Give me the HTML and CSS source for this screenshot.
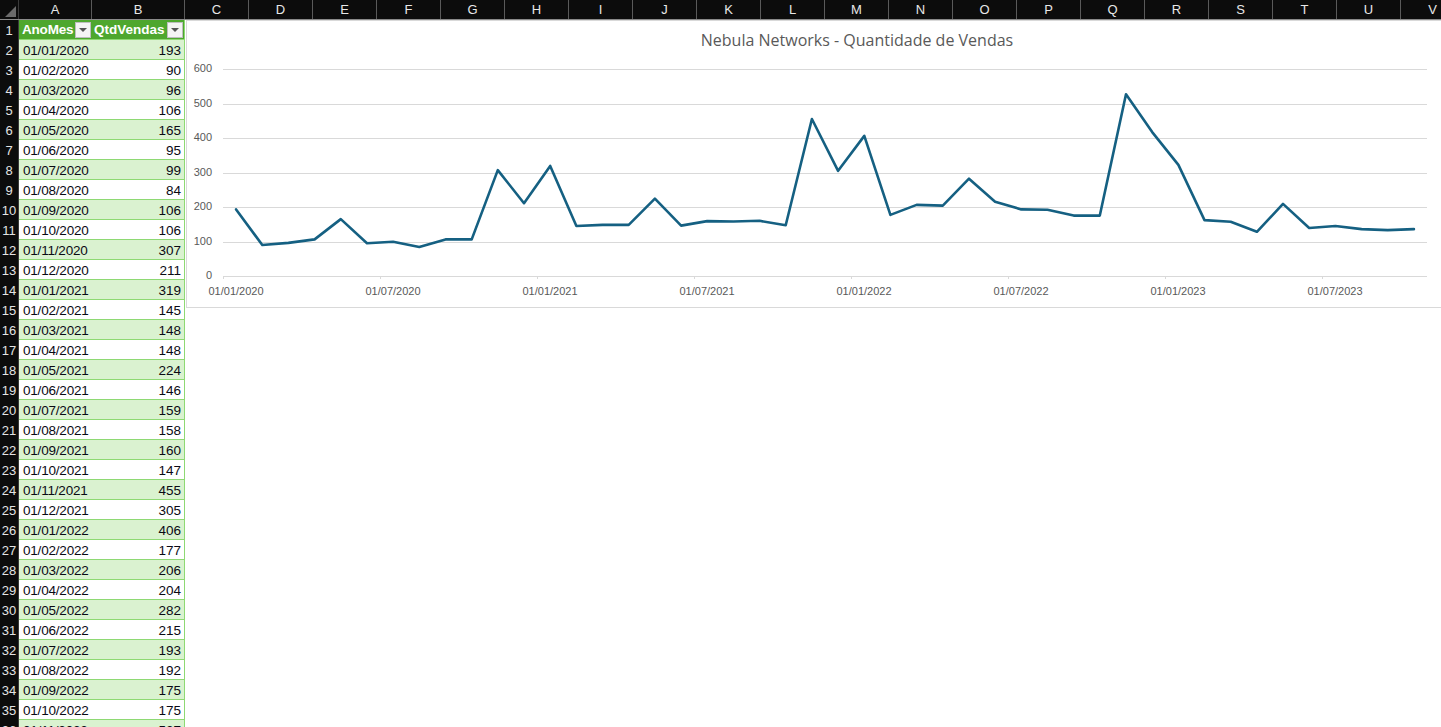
FILE: index.html
```html
<!DOCTYPE html>
<html lang="pt">
<head>
<meta charset="utf-8">
<title>Nebula Networks</title>
<link rel="stylesheet" href="styles.css">
</head>
<body>
<div class="sheet">
  <div class="colhead">
    <div class="corner"><span class="tri"></span></div>
    <div class="ch ch-a">A</div>
    <div class="ch ch-b">B</div>
    <div class="ch">C</div><div class="ch">D</div><div class="ch">E</div><div class="ch">F</div><div class="ch">G</div>
    <div class="ch">H</div><div class="ch">I</div><div class="ch">J</div><div class="ch">K</div><div class="ch">L</div>
    <div class="ch">M</div><div class="ch">N</div><div class="ch">O</div><div class="ch">P</div><div class="ch">Q</div>
    <div class="ch">R</div><div class="ch">S</div><div class="ch">T</div><div class="ch">U</div><div class="ch">V</div>
  </div>
  <div class="rows">
    <div class="row hdr"><div class="rh">1</div><div class="c a th">AnoMes<span class="fb"><span class="ft"></span></span></div><div class="c b th">QtdVendas<span class="fb"><span class="ft"></span></span></div></div>
    <div class="row band"><div class="rh">2</div><div class="c a">01/01/2020</div><div class="c b">193</div></div>
    <div class="row"><div class="rh">3</div><div class="c a">01/02/2020</div><div class="c b">90</div></div>
    <div class="row band"><div class="rh">4</div><div class="c a">01/03/2020</div><div class="c b">96</div></div>
    <div class="row"><div class="rh">5</div><div class="c a">01/04/2020</div><div class="c b">106</div></div>
    <div class="row band"><div class="rh">6</div><div class="c a">01/05/2020</div><div class="c b">165</div></div>
    <div class="row"><div class="rh">7</div><div class="c a">01/06/2020</div><div class="c b">95</div></div>
    <div class="row band"><div class="rh">8</div><div class="c a">01/07/2020</div><div class="c b">99</div></div>
    <div class="row"><div class="rh">9</div><div class="c a">01/08/2020</div><div class="c b">84</div></div>
    <div class="row band"><div class="rh">10</div><div class="c a">01/09/2020</div><div class="c b">106</div></div>
    <div class="row"><div class="rh">11</div><div class="c a">01/10/2020</div><div class="c b">106</div></div>
    <div class="row band"><div class="rh">12</div><div class="c a">01/11/2020</div><div class="c b">307</div></div>
    <div class="row"><div class="rh">13</div><div class="c a">01/12/2020</div><div class="c b">211</div></div>
    <div class="row band"><div class="rh">14</div><div class="c a">01/01/2021</div><div class="c b">319</div></div>
    <div class="row"><div class="rh">15</div><div class="c a">01/02/2021</div><div class="c b">145</div></div>
    <div class="row band"><div class="rh">16</div><div class="c a">01/03/2021</div><div class="c b">148</div></div>
    <div class="row"><div class="rh">17</div><div class="c a">01/04/2021</div><div class="c b">148</div></div>
    <div class="row band"><div class="rh">18</div><div class="c a">01/05/2021</div><div class="c b">224</div></div>
    <div class="row"><div class="rh">19</div><div class="c a">01/06/2021</div><div class="c b">146</div></div>
    <div class="row band"><div class="rh">20</div><div class="c a">01/07/2021</div><div class="c b">159</div></div>
    <div class="row"><div class="rh">21</div><div class="c a">01/08/2021</div><div class="c b">158</div></div>
    <div class="row band"><div class="rh">22</div><div class="c a">01/09/2021</div><div class="c b">160</div></div>
    <div class="row"><div class="rh">23</div><div class="c a">01/10/2021</div><div class="c b">147</div></div>
    <div class="row band"><div class="rh">24</div><div class="c a">01/11/2021</div><div class="c b">455</div></div>
    <div class="row"><div class="rh">25</div><div class="c a">01/12/2021</div><div class="c b">305</div></div>
    <div class="row band"><div class="rh">26</div><div class="c a">01/01/2022</div><div class="c b">406</div></div>
    <div class="row"><div class="rh">27</div><div class="c a">01/02/2022</div><div class="c b">177</div></div>
    <div class="row band"><div class="rh">28</div><div class="c a">01/03/2022</div><div class="c b">206</div></div>
    <div class="row"><div class="rh">29</div><div class="c a">01/04/2022</div><div class="c b">204</div></div>
    <div class="row band"><div class="rh">30</div><div class="c a">01/05/2022</div><div class="c b">282</div></div>
    <div class="row"><div class="rh">31</div><div class="c a">01/06/2022</div><div class="c b">215</div></div>
    <div class="row band"><div class="rh">32</div><div class="c a">01/07/2022</div><div class="c b">193</div></div>
    <div class="row"><div class="rh">33</div><div class="c a">01/08/2022</div><div class="c b">192</div></div>
    <div class="row band"><div class="rh">34</div><div class="c a">01/09/2022</div><div class="c b">175</div></div>
    <div class="row"><div class="rh">35</div><div class="c a">01/10/2022</div><div class="c b">175</div></div>
    <div class="row band"><div class="rh">36</div><div class="c a">01/11/2022</div><div class="c b">527</div></div>
  </div>

  <div class="chart">
    <div class="chart-title">Nebula Networks - Quantidade de Vendas</div>
    <svg class="plot" width="1340" height="250" viewBox="1 37 1340 250">
      <g class="grid">
        <line x1="37" y1="49.5" x2="1241" y2="49.5"/>
        <line x1="37" y1="84.5" x2="1241" y2="84.5"/>
        <line x1="37" y1="118.5" x2="1241" y2="118.5"/>
        <line x1="37" y1="153.5" x2="1241" y2="153.5"/>
        <line x1="37" y1="187.5" x2="1241" y2="187.5"/>
        <line x1="37" y1="222.5" x2="1241" y2="222.5"/>
        <line x1="37" y1="256.5" x2="1241" y2="256.5"/>
        <line x1="37.5" y1="256" x2="37.5" y2="259"/>
        <line x1="194.5" y1="256" x2="194.5" y2="259"/>
        <line x1="351.5" y1="256" x2="351.5" y2="259"/>
        <line x1="508.5" y1="256" x2="508.5" y2="259"/>
        <line x1="665.5" y1="256" x2="665.5" y2="259"/>
        <line x1="822.5" y1="256" x2="822.5" y2="259"/>
        <line x1="979.5" y1="256" x2="979.5" y2="259"/>
        <line x1="1136.5" y1="256" x2="1136.5" y2="259"/>
      </g>
      <g class="ylab">
        <text x="26" y="49">600</text>
        <text x="26" y="84">500</text>
        <text x="26" y="118">400</text>
        <text x="26" y="153">300</text>
        <text x="26" y="187">200</text>
        <text x="26" y="222">100</text>
        <text x="26" y="256">0</text>
      </g>
      <g class="xlab">
        <text x="50" y="272">01/01/2020</text>
        <text x="207" y="272">01/07/2020</text>
        <text x="364" y="272">01/01/2021</text>
        <text x="521" y="272">01/07/2021</text>
        <text x="678" y="272">01/01/2022</text>
        <text x="835" y="272">01/07/2022</text>
        <text x="992" y="272">01/01/2023</text>
        <text x="1149" y="272">01/07/2023</text>
      </g>
      <polyline class="series" points="50.1,189.4 76.3,225.0 102.4,222.9 128.6,219.4 154.8,199.1 181.0,223.2 207.1,221.8 233.3,227.0 259.5,219.4 285.7,219.4 311.8,150.1 338.0,183.2 364.2,145.9 390.4,206.0 416.5,204.9 442.7,204.9 468.9,178.7 495.1,205.6 521.2,201.1 547.4,201.5 573.6,200.8 599.7,205.3 625.9,99.0 652.1,150.8 678.3,115.9 704.4,194.9 730.6,184.9 756.8,185.6 783.0,158.7 809.1,181.8 835.3,189.4 861.5,189.8 887.7,195.6 913.8,195.6 940.0,74.2 966.2,112.1 992.4,144.9 1018.5,200.1 1044.7,201.8 1070.9,211.8 1097.0,183.9 1123.2,208.0 1149.4,206.0 1175.6,209.1 1201.7,210.1 1227.9,209.1"/>
    </svg>
  </div>
</div>
</body>
</html>
```

FILE: styles.css
```css
html, body {
  margin: 0;
  padding: 0;
  overflow: hidden;
  background: #ffffff;
}

.sheet {
  position: relative;
  width: 1441px;
  height: 727px;
  overflow: hidden;
  font-family: "Liberation Sans", Arial, sans-serif;
  background: #ffffff;
}

/* column header bar */
.colhead {
  display: flex;
  height: 20px;
  box-sizing: border-box;
  background: #0c0c0c;
  border-bottom: 1px solid #8a8a8a;
}

.corner {
  position: relative;
  width: 19px;
  flex: none;
  box-sizing: border-box;
  border-right: 1px solid #3a3a3a;
}

.corner .tri {
  position: absolute;
  right: 2px;
  bottom: 2px;
  width: 0;
  height: 0;
  border-left: 11px solid transparent;
  border-bottom: 11px solid #6b6b6b;
}

.ch {
  width: 64px;
  flex: none;
  box-sizing: border-box;
  border-right: 1px solid #5a5a5a;
  color: #e8e8e8;
  font-size: 13px;
  line-height: 20px;
  text-align: center;
}

.ch-a { width: 73px; }
.ch-b { width: 93px; }

/* rows */
.rows {
  display: flex;
  flex-direction: column;
}

.row {
  display: flex;
  height: 20px;
}

.rh {
  width: 19px;
  flex: none;
  box-sizing: border-box;
  background: #0c0c0c;
  color: #e4e4e4;
  font-size: 13px;
  line-height: 21px;
  text-align: center;
  border-right: 1px solid #3a3a3a;
}

.c {
  box-sizing: border-box;
  height: 20px;
  font-size: 13.5px;
  line-height: 21px;
  color: #0a0a14;
  background: #ffffff;
  border-bottom: 1px solid #8ed973;
  white-space: nowrap;
  overflow: hidden;
}

.c.a {
  width: 73px;
  padding-left: 4px;
  letter-spacing: -0.2px;
}

.c.b {
  width: 93px;
  padding-right: 3px;
  text-align: right;
  border-right: 1px solid #8ed973;
}

.band .c {
  background: #daf2d0;
}

.hdr .c {
  background: #4ea72e;
  color: #ffffff;
  font-weight: bold;
  display: flex;
  align-items: center;
  justify-content: space-between;
}

.hdr .c.a { padding-left: 3px; padding-right: 1px; }
.hdr .c.b { padding-left: 2px; padding-right: 1px; }

.fb {
  width: 16px;
  height: 16px;
  box-sizing: border-box;
  background: #f4f4f4;
  border: 1px solid #bdbdbd;
  display: flex;
  align-items: center;
  justify-content: center;
}

.ft {
  width: 0;
  height: 0;
  border-left: 4px solid transparent;
  border-right: 4px solid transparent;
  border-top: 4px solid #555555;
  margin-top: 1px;
}

/* floating chart object */
.chart {
  position: absolute;
  left: 186px;
  top: 20px;
  width: 1342px;
  height: 288px;
  box-sizing: border-box;
  border: 1px solid #d9d9d9;
  background: #ffffff;
}

.chart-title {
  height: 36px;
  padding-top: 2px;
  box-sizing: border-box;
  text-align: center;
  font-family: "Open Sans", "Liberation Sans", sans-serif;
  font-size: 16px;
  line-height: 34px;
  color: #595959;
}

.plot {
  display: block;
}

.grid line {
  stroke: #d9d9d9;
  stroke-width: 1;
  shape-rendering: crispEdges;
}

.ylab text {
  font-family: "Liberation Sans", Arial, sans-serif;
  font-size: 11px;
  fill: #595959;
  text-anchor: end;
  dominant-baseline: middle;
}

.xlab text {
  font-family: "Liberation Sans", Arial, sans-serif;
  font-size: 11px;
  fill: #595959;
  text-anchor: middle;
  dominant-baseline: middle;
}

.series {
  fill: none;
  stroke: #156082;
  stroke-width: 2.6;
  stroke-linejoin: round;
  stroke-linecap: round;
}
```
